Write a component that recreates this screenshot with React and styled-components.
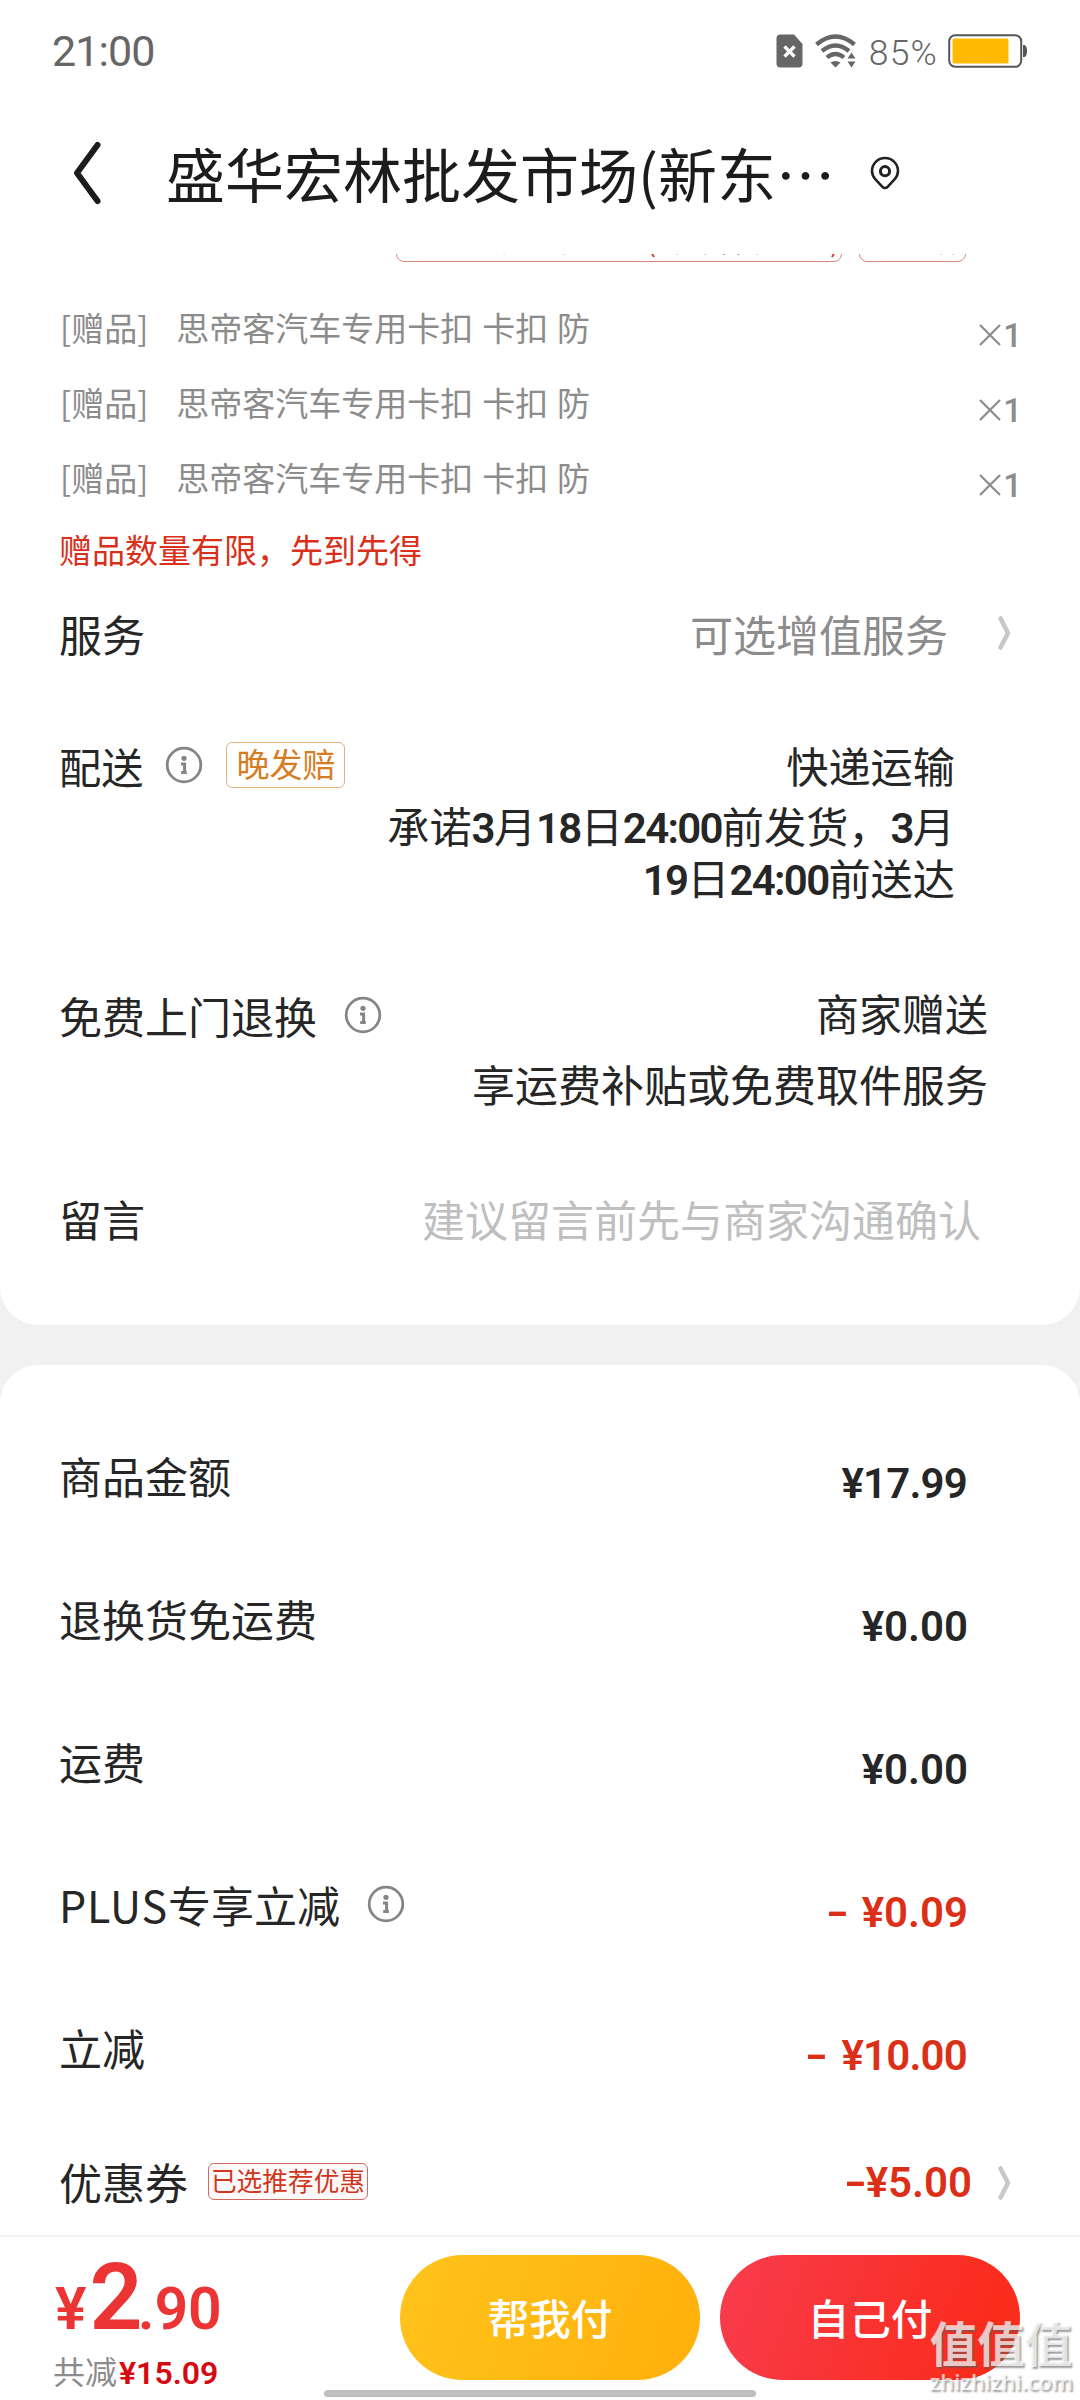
import React from "react";
import styled, { createGlobalStyle } from "styled-components";

const CJK = `"Noto Sans CJK SC", sans-serif`;
const LATIN = `Roboto, "Noto Sans CJK SC", sans-serif`;

const GlobalStyle = createGlobalStyle`
  * { box-sizing: border-box; }
  body { margin: 0; background: #fff; }
`;

const Screen = styled.div`
  position: relative;
  display: flex;
  flex-direction: column;
  width: 1080px;
  height: 2400px;
  overflow: hidden;
  background: #f1f1f1;
  color: #262626;
  font-family: ${CJK};
  font-size: 43px;
  white-space: nowrap;
`;

const StatusBar = styled.header`
  display: flex;
  align-items: center;
  justify-content: space-between;
  height: 102px;
  padding: 0 52px;
  background: #fff;
  color: #666;
`;

const Clock = styled.span`
  font-family: ${LATIN};
  font-size: 43px;
  letter-spacing: -0.9px;
`;

const StatusIcons = styled.div`
  display: flex;
  align-items: center;
`;

const BatteryText = styled.span`
  margin: 4px 10px 0 12px;
  font-family: ${LATIN};
  font-size: 35.5px;
  font-weight: 300;
  letter-spacing: 1.2px;
`;

const NavBar = styled.nav`
  display: flex;
  align-items: center;
  height: 152px;
  padding: 0 0 10px 72px;
  background: #fff;
  color: #1c1c1c;
`;

const Title = styled.h1`
  margin: 0 35px 0 64px;
  font-size: 59px;
  font-weight: 400;
  line-height: 88px;
`;

const Card = styled.section`
  display: flex;
  flex-direction: column;
  background: #fff;
`;

const OrderCard = styled(Card)`
  height: 1071px;
  margin-bottom: 40px;
  border-radius: 0 0 38px 38px;
`;

const AmountCard = styled(Card)`
  height: 870px;
  padding-top: 38px;
  border-radius: 38px 38px 0 0;
`;

const TagStrip = styled.div`
  display: flex;
  align-items: flex-end;
  gap: 17px;
  height: 8px;
  margin: 0 0 27px 396px;
  overflow: hidden;
`;

const PolicyTag = styled.span`
  flex: none;
  width: ${(p) => p.$width}px;
  height: 44px;
  border: 1px solid #d6877c;
  border-radius: 8px;
  color: #c9402c;
  font-size: 29px;
  line-height: 41px;
  text-align: center;
`;

const GiftRow = styled.div`
  display: flex;
  align-items: center;
  height: 75px;
  padding: 0 58px 0 60px;
  color: #8c8c8c;
  font-size: 33px;
  word-spacing: 1.5px;
`;

const GiftName = styled.span`
  flex: 1;
  margin-left: 28px;
`;

const GiftCount = styled.span`
  display: flex;
  align-items: center;
  gap: 1px;
  margin-top: 17px;
  font-family: ${LATIN};
  font-weight: 500;
`;

const Notice = styled.p`
  margin: 0;
  padding-left: 59px;
  color: #d8301a;
  font-size: 33px;
  line-height: 70px;
`;

const Row = styled.div`
  display: flex;
  align-items: center;
  justify-content: space-between;
  height: ${(p) => p.$height}px;
  padding: 0 ${(p) => p.$right}px 0 59px;
`;

const Block = styled.div`
  display: flex;
  align-items: flex-start;
  justify-content: space-between;
  height: ${(p) => p.$height}px;
  padding: ${(p) => p.$top}px ${(p) => p.$right}px 0 59px;
  font-size: ${(p) => p.$size || 43}px;
`;

const Label = styled.div`
  display: flex;
  align-items: center;
  height: ${(p) => p.$line || 64}px;
`;

const Muted = styled.span`
  display: flex;
  align-items: center;
  gap: 49px;
  color: #8c8c8c;
`;

const Placeholder = styled.span`
  color: #bfbfbf;
`;

const Lines = styled.div`
  display: flex;
  flex-direction: column;
  text-align: right;
  line-height: ${(p) => p.$line}px;
`;

const Promise = styled.div`
  margin-top: 8px;
`;

const Digits = styled.span`
  font-family: ${LATIN};
  font-size: 42px;
  font-weight: 600;
  letter-spacing: -1.7px;
  line-height: 1;
`;

const LateTag = styled.span`
  width: 119px;
  height: 46px;
  margin-left: 23px;
  border: 1px solid #e3b27c;
  border-radius: 6px;
  color: #d67c22;
  font-size: 33px;
  line-height: 41px;
  text-align: center;
`;

const CouponTag = styled.span`
  width: 160px;
  height: 37px;
  margin-left: 20px;
  border: 1px solid #cf6a62;
  border-radius: 6px;
  background: #fffafa;
  color: #cf3620;
  font-size: 25.7px;
  line-height: 31px;
  text-align: center;
`;

const Amount = styled.span`
  display: flex;
  align-items: center;
  gap: ${(p) => p.$gap || 0}px;
  margin-top: ${(p) => (p.$inline ? 3 : 17)}px;
  color: ${(p) => (p.$off ? "#dc2f18" : "#262626")};
  font-family: ${LATIN};
  font-size: 42px;
  font-weight: 600;
`;

const AmountValue = styled.span`
  margin-right: ${(p) => (p.$tight ? 1 : 0)}px;
  letter-spacing: ${(p) => (p.$tight ? -0.8 : 0)}px;
`;

const Minus = styled.span`
  display: inline-block;
  width: 18px;
  transform: scaleX(1.5);
  transform-origin: left center;
`;

const CouponValue = styled.span`
  display: flex;
  gap: 4px;
`;

const CouponRow = styled(Row)`
  padding-top: 10px;
`;

const Footer = styled.footer`
  display: flex;
  align-items: flex-start;
  height: 165px;
  padding: 18px 60px 0 53px;
  border-top: 2px solid #f3f3f3;
  background: #fff;
`;

const Total = styled.div`
  flex: 1;
`;

const TotalPrice = styled.div`
  height: 93px;
  margin-top: -4px;
  padding-left: 2px;
  color: #ec3434;
  font-family: ${LATIN};
  font-size: 59px;
  font-weight: 600;
  line-height: 90px;
`;

const TotalInteger = styled.span`
  margin: 0 -2px 0 3px;
  font-size: 93px;
  line-height: 1;
  letter-spacing: -3px;
`;

const Saved = styled.div`
  margin-top: 3px;
  color: #8c8c8c;
  font-size: 32px;
  line-height: 46px;
`;

const SavedValue = styled.span`
  margin-left: 2px;
  color: #d50a10;
  font-family: ${LATIN};
  font-weight: 600;
`;

const PayButton = styled.button`
  width: 300px;
  height: 125px;
  margin-left: ${(p) => p.$gap || 0}px;
  padding: 0 0 1px;
  border: 0;
  border-radius: 63px;
  background: ${(p) => p.$fill};
  color: #fff;
  font-family: ${CJK};
  font-size: 41.5px;
  font-weight: 500;
`;

const HomeIndicator = styled.div`
  position: absolute;
  left: 324px;
  bottom: 3px;
  width: 432px;
  height: 7px;
  border-radius: 4px;
  background: #bfbfbf;
`;

const Watermark = styled.div`
  position: absolute;
  right: 7px;
  bottom: 4px;
  color: rgba(255, 255, 255, 0.72);
  font-weight: 700;
  text-shadow: 1.5px 1.5px 2px rgba(90, 90, 90, 0.6);
`;

const WatermarkName = styled.div`
  font-size: 47.5px;
  line-height: 48px;
`;

const WatermarkSite = styled.div`
  font-family: "Open Sans", sans-serif;
  font-size: 22px;
  font-weight: 600;
  line-height: 30px;
`;

const InfoSvg = styled.svg`
  flex: none;
  margin-left: ${(p) => p.$gap}px;
`;

function Info({ gap }) {
  return (
    <InfoSvg $gap={gap} width="38" height="38" viewBox="0 0 38 38" fill="none" stroke="#858585">
      <circle cx="19" cy="19" r="16.8" strokeWidth="2.8" />
      <circle cx="19" cy="12.3" r="2.6" fill="#858585" stroke="none" />
      <path d="M16 18h3.600v8.600M16.200 26.600h5.600" strokeWidth="3" />
    </InfoSvg>
  );
}

function Arrow() {
  return (
    <svg width="16" height="36" viewBox="0 0 16 36" fill="none" stroke="#c8c8c8" strokeWidth="4.600" strokeLinecap="round">
      <path d="M3.500 3.500L11 18L3.500 32.500" strokeLinejoin="round" />
    </svg>
  );
}

function Times() {
  return (
    <svg width="24" height="24" viewBox="0 0 24 24" fill="none" stroke="#8c8c8c" strokeWidth="2.200">
      <path d="M2 2L22 22M22 2L2 22" />
    </svg>
  );
}

function SimIcon() {
  return (
    <svg width="27" height="34" viewBox="0 0 27 34">
      <path d="M4.500 .5H18L26.500 10V29.500Q26.500 33.500 22.500 33.500H4.500Q.5 33.500 .5 29.500V4.500Q.5 .5 4.500 .5Z" fill="#666" />
      <path d="M8.500 12.500L18.500 22.500M18.500 12.500L8.500 22.500" stroke="#fff" strokeWidth="3.200" />
    </svg>
  );
}

const WifiSvg = styled.svg`
  margin-left: 12px;
`;

function WifiIcon() {
  return (
    <WifiSvg width="42" height="34" viewBox="0 0 42 34" fill="none" stroke="#666">
      <path d="M1.500 10.500Q20.500 -5.500 39.500 10.500" strokeWidth="4.500" />
      <path d="M7 17Q20.500 6 34 17" strokeWidth="4.200" />
      <path d="M12 23.500Q20.500 16.500 29 23.500" strokeWidth="4.200" />
      <path d="M15.500 28.500Q20.500 25.500 25.500 28.500L20.500 33.500Z" fill="#666" stroke="none" />
      <path d="M32.500 24.500L36.500 18.500L40.500 24.500ZM32.500 27.500L36.500 33.500L40.500 27.500Z" fill="#666" stroke="none" />
    </WifiSvg>
  );
}

function BatteryIcon() {
  return (
    <svg width="80" height="34" viewBox="0 0 80 34">
      <rect x="1.200" y="1.200" width="72" height="31.600" rx="6" fill="#fff" stroke="#555" strokeWidth="2" />
      <rect x="4.500" y="4.500" width="56" height="25" rx="1.500" fill="#ffba00" />
      <path d="M75 11H76.500Q79 12 79 17T76.500 23H75Z" fill="#555" />
    </svg>
  );
}

function BackIcon() {
  return (
    <svg width="30" height="64" viewBox="0 0 30 64" fill="none" stroke="#1c1c1c" strokeWidth="6">
      <path d="M25.500 4L5 32L25.500 60" strokeLinecap="round" strokeLinejoin="round" />
    </svg>
  );
}

function PinIcon() {
  return (
    <svg width="30" height="34" viewBox="0 0 30 34" fill="none" stroke="#222" strokeWidth="2.600">
      <path d="M15 32Q13.500 32 12.400 30.800L5.500 23.500Q2 19.500 2 15A13 13 0 0 1 28 15Q28 19.500 24.500 23.500L17.600 30.800Q16.500 32 15 32Z" />
      <circle cx="15" cy="15.200" r="4.600" strokeWidth="3" />
    </svg>
  );
}

const GIFTS = ["gift-1", "gift-2", "gift-3"];

const AMOUNTS = [
  { name: "商品金额", value: "¥17.99", tight: true },
  { name: "退换货免运费", value: "¥0.00" },
  { name: "运费", value: "¥0.00" },
  { name: "PLUS专享立减", value: "¥0.09", off: true, info: true },
  { name: "立减", value: "¥10.00", off: true, tight: true },
];

const Plus = styled.span`
  letter-spacing: 0.9px;
`;

function AmountName({ name }) {
  if (!name.startsWith("PLUS")) return <span>{name}</span>;
  return (
    <span>
      <Plus>PLUS</Plus>
      {name.slice(4)}
    </span>
  );
}

export default function App() {
  return (
    <Screen>
      <GlobalStyle />
      <StatusBar>
        <Clock>21:00</Clock>
        <StatusIcons>
          <SimIcon />
          <WifiIcon />
          <BatteryText>85%</BatteryText>
          <BatteryIcon />
        </StatusIcons>
      </StatusBar>
      <NavBar>
        <BackIcon />
        <Title>盛华宏林批发市场(新东…</Title>
        <PinIcon />
      </NavBar>

      <OrderCard>
        <TagStrip>
          <PolicyTag $width={446}>支持7天无理由退货(拆封后不支持)</PolicyTag>
          <PolicyTag $width={107}>7天价保</PolicyTag>
        </TagStrip>
        {GIFTS.map((id) => (
          <GiftRow key={id}>
            <span>[赠品]</span>
            <GiftName>思帝客汽车专用卡扣 卡扣 防</GiftName>
            <GiftCount>
              <Times />1
            </GiftCount>
          </GiftRow>
        ))}
        <Notice>赠品数量有限，先到先得</Notice>
        <Row $height={98} $right={67}>
          <Label>服务</Label>
          <Muted>
            可选增值服务
            <Arrow />
          </Muted>
        </Row>
        <Block $height={277} $top={57} $right={125} $size={42.2}>
          <Label $line={52}>
            配送
            <Info gap={22} />
            <LateTag>晚发赔</LateTag>
          </Label>
          <Lines $line={52}>
            快递运输
            <Promise>
              承诺<Digits>3</Digits>月<Digits>18</Digits>日<Digits>24:00</Digits>前发货，<Digits>3</Digits>月
              <br />
              <Digits>19</Digits>日<Digits>24:00</Digits>前送达
            </Promise>
          </Lines>
        </Block>
        <Block $height={160} $top={18} $right={92}>
          <Label $line={75}>
            免费上门退换
            <Info gap={27} />
          </Label>
          <Lines $line={71}>
            商家赠送
            <br />
            享运费补贴或免费取件服务
          </Lines>
        </Block>
        <Row $height={197} $right={99}>
          <Label>留言</Label>
          <Placeholder>建议留言前先与商家沟通确认</Placeholder>
        </Row>
      </OrderCard>

      <AmountCard>
        {AMOUNTS.map((a) => (
          <Row key={a.name} $height={143} $right={112}>
            <Label>
              <AmountName name={a.name} />
              {a.info && <Info gap={27} />}
            </Label>
            <Amount $off={a.off} $gap={18}>
              {a.off && <Minus>-</Minus>}
              <AmountValue $tight={a.tight}>{a.value}</AmountValue>
            </Amount>
          </Row>
        ))}
        <CouponRow $height={116} $right={67}>
          <Label>
            优惠券
            <CouponTag>已选推荐优惠</CouponTag>
          </Label>
          <Amount $off $inline $gap={25}>
            <CouponValue>
              <Minus>-</Minus>
              <span>¥5.00</span>
            </CouponValue>
            <Arrow />
          </Amount>
        </CouponRow>
      </AmountCard>

      <Footer>
        <Total>
          <TotalPrice>
            ¥<TotalInteger>2</TotalInteger>.90
          </TotalPrice>
          <Saved>
            共减<SavedValue>¥15.09</SavedValue>
          </Saved>
        </Total>
        <PayButton $fill="linear-gradient(110deg, #ffc41c, #ffaf0a)">帮我付</PayButton>
        <PayButton $gap={20} $fill="linear-gradient(110deg, #f83c4e, #fa2c1c 85%)">自己付</PayButton>
      </Footer>
      <HomeIndicator />
      <Watermark>
        <WatermarkName>值值值</WatermarkName>
        <WatermarkSite>zhizhizhi.com</WatermarkSite>
      </Watermark>
    </Screen>
  );
}
